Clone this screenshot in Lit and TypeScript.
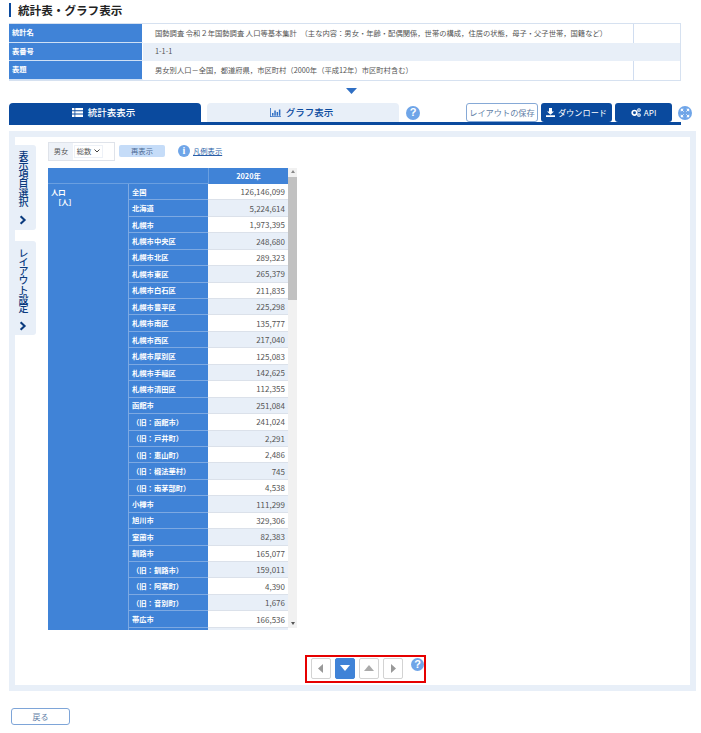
import { LitElement, html, css, svg } from "lit";
import { customElement } from "lit/decorators.js";

const ROWS: [string, string, boolean?][] = [
  ["全国", "126,146,099"], ["北海道", "5,224,614"], ["札幌市", "1,973,395"], ["札幌市中央区", "248,680"],
  ["札幌市北区", "289,323"], ["札幌市東区", "265,379"], ["札幌市白石区", "211,835"], ["札幌市豊平区", "225,298"],
  ["札幌市南区", "135,777"], ["札幌市西区", "217,040"], ["札幌市厚別区", "125,083"], ["札幌市手稲区", "142,625"],
  ["札幌市清田区", "112,355"], ["函館市", "251,084"], ["（旧：函館市）", "241,024", true], ["（旧：戸井町）", "2,291", true],
  ["（旧：恵山町）", "2,486", true], ["（旧：椴法華村）", "745", true], ["（旧：南茅部町）", "4,538", true], ["小樽市", "111,299"],
  ["旭川市", "329,306"], ["室蘭市", "82,383"], ["釧路市", "165,077"], ["（旧：釧路市）", "159,011", true],
  ["（旧：阿寒町）", "4,390", true], ["（旧：音別町）", "1,676", true], ["帯広市", "166,536"], ["", ""],
];

const help = (cls: string) => html`<span class="help ${cls}">?</span>`;
const chevron = html`<svg class="chev" viewBox="0 0 10 12" width="8" height="10"><path d="M2 1.2 7 6l-5 4.8" fill="none" stroke="#0a3a7e" stroke-width="2.6"/></svg>`;

@customElement("app-root")
export class AppRoot extends LitElement {
  static styles = css`
    :host { display: block; width: 701px; height: 733px; overflow: hidden; background: #fff; box-sizing: border-box; padding-top: 3px;
      font-family: "Noto Sans CJK JP", "Noto Sans", sans-serif; font-size: 7.3px; color: #555; }
    * { box-sizing: border-box; }
    .title { margin: 0 0 0 9px; height: 14px; border-left: 2px solid #0a4a9e; padding-left: 7px; font-size: 11.6px; line-height: 14px; font-weight: 700; color: #222; }
    .info { margin: 6px 0 0 9px; width: 672px; display: grid; grid-template-columns: 134px 491px 1fr; grid-auto-rows: 18.67px; border: solid #d6e1f0; border-width: 1px 1px 1px 0; }
    .info > div { display: flex; align-items: center; line-height: 1; }
    .info .k { background: #4083d7; color: #fff; font-weight: 700; padding-left: 3px; border-right: 1px solid #fff; border-bottom: 1px solid #cfe0f5; }
    .info .k:last-of-type { border-bottom: 0; }
    .info .v { padding-left: 12px; border-right: 1px solid #d0ddf0; white-space: nowrap; }
    .info .alt { background: #e8eff8; border-right-color: #e8eff8; }
    .info .alt2 { background: #e8eff8; }
    .more { display: block; margin: 7px 0 0 346px; }
    .tabs { margin: 9px 0 0 9px; width: 672px; height: 22px; border-bottom: 3px solid #0a4a9e; display: flex; }
    .tabs > * { flex: none; }
    .tab { width: 192px; height: 19px; border-radius: 4px 4px 0 0; display: flex; align-items: center; justify-content: center; gap: 5px; padding-right: 3px; font-size: 9.5px; font-weight: 500; }
    .tab.on { background: #0a4a9e; color: #fff; }
    .tab.off { background: #e8eff8; color: #0a4a9e; margin-left: 6px; }
    .help { display: inline-flex; align-items: center; justify-content: center; width: 14px; height: 14px; border-radius: 50%; background: #6fa5e8; color: #fff; font: 700 11px/1 "Liberation Sans", sans-serif; flex: none; }
    .tabs .help { margin: 3px 0 0 7px; }
    .btn { height: 19px; border-radius: 3px; display: flex; align-items: center; justify-content: center; gap: 3px; font-size: 8.2px; white-space: nowrap; }
    .b1 { width: 72px; margin-left: 46px; border: 1px solid #86a9d6; color: #5f7ea6; background: #fff; }
    .b2 { width: 71px; margin-left: 3px; background: #0a4a9e; color: #fff; }
    .b3 { width: 57px; margin-left: 3px; background: #0a4a9e; color: #fff; }
    .full { margin: 3px 0 0 6px; }
    .panel { margin: 6px 0 0 9px; width: 687px; height: 560px; background: #e8eff8; padding: 6px; }
    .inner { background: #fff; height: 548px; display: flex; }
    .side { width: 21px; flex: none; padding-top: 8px; display: flex; flex-direction: column; }
    .stab { background: #e8eff8; border-radius: 0 3px 3px 0; display: flex; flex-direction: column; align-items: flex-start; padding-left: 3px; color: #0a3a7e; font-weight: 500; }
    .stab.a { height: 85px; padding-top: 6px; }
    .stab.b { height: 94px; margin-top: 11px; padding-top: 7px; }
    .vt { writing-mode: vertical-rl; font-size: 10px; line-height: 1; letter-spacing: -0.8px; }
    .chev { margin: 9px 0 0 1px; }
    .main { margin-left: 12px; padding-top: 5px; }
    .ctl { display: flex; align-items: center; height: 19px; }
    .box { display: flex; width: 67px; height: 19px; border: 1px solid #dfe3ea; }
    .box .lb { width: 24px; background: #eef2f8; display: flex; align-items: center; justify-content: center; }
    .box .sel { margin: 2px 0 0 1px; width: 29px; height: 13px; border: 1px solid #edf1f7; display: flex; align-items: center; justify-content: center; gap: 3px; }
    .re { width: 46px; height: 12px; margin-left: 4px; border-radius: 2px; background: #c5dcf8; color: #4b6a94; display: flex; align-items: center; justify-content: center; }
    .i { margin-left: 13px; width: 12px; height: 12px; border-radius: 50%; background: #6fa5e8; color: #fff; font: 700 10px/12px "Liberation Serif", serif; text-align: center; flex: none; }
    .lnk { margin-left: 3px; color: #2a5fa8; text-decoration: underline; }
    .tbl { margin-top: 7px; width: 249px; height: 462px; overflow: hidden; display: grid; grid-template-columns: 240px 9px; }
    .grid { display: grid; grid-template-columns: 80px 80px 80px; grid-template-rows: 16px 1fr; height: 462px; }
    .h0 { grid-column: 1 / 3; background: #4083d7; border-bottom: 1px solid #6a9fe0; }
    .h1 { background: #4083d7; color: #fff; font-weight: 700; display: flex; align-items: center; justify-content: center; border-left: 1px solid #6a9fe0; }
    .stub { background: #4083d7; color: #fff; font-weight: 700; padding: 3px 0 0 3px; line-height: 10px; }
    .stub span { display: block; padding-left: 3px; }
    .rows { grid-column: 2 / 4; overflow: hidden; }
    .r { display: grid; grid-template-columns: 80px 80px; height: 16.44px; }
    .r .n { background: #4083d7; color: #fff; font-weight: 700; border-left: 1px solid #7da9e2; border-bottom: 1px solid #7da9e2; padding-left: 3px; display: flex; align-items: center; white-space: nowrap; }
    .r .d { border-bottom: 1px solid #dbe1ea; display: flex; align-items: center; justify-content: flex-end; padding-right: 3px; font-size: 8px; background: #fff; }
    .r:nth-child(even) .d { background: #e8eff8; }
    .bar { background: #f1f1f1; height: 460px; position: relative; }
    .thumb { margin-top: 9px; height: 123px; background: #c1c1c1; }
    .ua, .da { position: absolute; left: 2.5px; width: 0; height: 0; border: 2px solid transparent; }
    .ua { top: 2px; border-bottom: 3px solid #888; border-top: 0; }
    .da { bottom: 3px; border-top: 3px solid #555; border-bottom: 0; }
    .pager { margin: 25px 0 0 257px; width: 121px; height: 28px; border: 2px solid #e60000; display: flex; padding: 1px 0 0 4px; }
    .pb { width: 20px; height: 21px; margin-right: 4px; border: 1px solid #d3d3d3; border-radius: 2px; background: #fff; display: flex; align-items: center; justify-content: center; }
    .pb.on { background: #4083d7; border-color: #4083d7; }
    .pager .help { margin: 0 0 0 4px; width: 13px; height: 13px; }
    .back { margin: 17px 0 0 11px; width: 59px; height: 17px; border: 1px solid #7ea5d8; border-radius: 3px; display: flex; align-items: center; justify-content: center; color: #5f7ea6; font-size: 8px; }
  `;

  render() {
    return html`
      <h1 class="title">統計表・グラフ表示</h1>
      <div class="info">
        <div class="k">統計名</div><div class="v">国勢調査 令和２年国勢調査 人口等基本集計　（主な内容：男女・年齢・配偶関係，世帯の構成，住居の状態，母子・父子世帯，国籍など）</div><div></div>
        <div class="k">表番号</div><div class="v alt">1-1-1</div><div class="alt2"></div>
        <div class="k">表題</div><div class="v">男女別人口－全国，都道府県，市区町村（2000年（平成12年）市区町村含む）</div><div></div>
      </div>
      <svg class="more" width="11" height="6" viewBox="0 0 11 6"><path d="M0 0h11L5.500 6z" fill="#2f6fc4"/></svg>
      <div class="tabs">
        <div class="tab on">
          <svg width="11" height="9" viewBox="0 0 11 9" fill="#fff"><path d="M0 0h2.500v2.300H0zM3.300 0H11v2.300H3.300zM0 3.300h2.500v2.300H0zM3.300 3.300H11v2.300H3.300zM0 6.600h2.500V9H0zM3.300 6.600H11V9H3.300z"/></svg>
          <span>統計表表示</span>
        </div>
        <div class="tab off">
          <svg width="11" height="9" viewBox="0 0 11 9" fill="#2f6fc4"><path d="M0 0h.8v8.200H11V9H0zM2 5h1.500v2.700H2zM4.300 2.500h1.500v5.200H4.300zM6.600 4h1.500v3.700H6.600zM8.900 1.500h1.500v6.200H8.900z"/></svg>
          <span>グラフ表示</span>
        </div>
        ${help("")}
        <div class="btn b1">レイアウトの保存</div>
        <div class="btn b2">
          <svg width="9" height="9" viewBox="0 0 9 9" fill="#fff"><path d="M3 0h3v3.500h2L4.500 6.800 1 3.500h2zM0 7.200h9V9H0z"/></svg>
          <span>ダウンロード</span>
        </div>
        <div class="btn b3">
          <svg width="10" height="9" viewBox="0 0 10 9"><circle cx="3.500" cy="4.800" r="2.300" fill="none" stroke="#fff" stroke-width="1.700"/><circle cx="8" cy="2" r="1.300" fill="none" stroke="#fff" stroke-width="1.100"/><circle cx="8" cy="7" r="1.300" fill="none" stroke="#fff" stroke-width="1.100"/></svg>
          <span>API</span>
        </div>
        <svg class="full" width="14" height="14" viewBox="0 0 15 15">
          <circle cx="7.500" cy="7.500" r="7.500" fill="#6fa5e8"/>
          ${svg`<path d="M3 3h3.200L3 6.200zM12 3v3.200L8.800 3zM3 12V8.800L6.200 12zM12 12H8.800L12 8.800z" fill="#fff"/><path d="M4.300 4.300l1.700 1.700M10.700 4.300 9 6M4.300 10.700 6 9M10.700 10.700 9 9" stroke="#fff" stroke-width="1"/>`}
        </svg>
      </div>
      <div class="panel">
        <div class="inner">
          <div class="side">
            <div class="stab a"><span class="vt">表示項目選択</span>${chevron}</div>
            <div class="stab b"><span class="vt">レイアウト設定</span>${chevron}</div>
          </div>
          <div class="main">
            <div class="ctl">
              <div class="box">
                <div class="lb">男女</div>
                <div class="sel">総数
                  <svg width="6" height="4" viewBox="0 0 6 4"><path d="M.5.500 3 3 5.500.5" fill="none" stroke="#444" stroke-width="1"/></svg>
                </div>
              </div>
              <div class="re">再表示</div>
              <div class="i">i</div>
              <span class="lnk">凡例表示</span>
            </div>
            <div class="tbl">
              <div class="grid">
                <div class="h0"></div>
                <div class="h1">2020年</div>
                <div class="stub">人口<span>［人］</span></div>
                <div class="rows">
                  ${ROWS.map(([n, d]) => html`<div class="r"><div class="n">${n}</div><div class="d">${d}</div></div>`)}
                </div>
              </div>
              <div class="bar"><i class="ua"></i><div class="thumb"></div><i class="da"></i></div>
            </div>
            <div class="pager">
              <div class="pb"><svg width="6" height="9" viewBox="0 0 6 9"><path d="M5 0v9L0 4.500z" fill="#999"/></svg></div>
              <div class="pb on"><svg width="10" height="6" viewBox="0 0 10 6"><path d="M0 0h10L5 6z" fill="#fff"/></svg></div>
              <div class="pb"><svg width="10" height="6" viewBox="0 0 10 6"><path d="M0 6h10L5 0z" fill="#aaa"/></svg></div>
              <div class="pb"><svg width="6" height="9" viewBox="0 0 6 9"><path d="M1 0v9l5-4.500z" fill="#999"/></svg></div>
              ${help("")}
            </div>
          </div>
        </div>
      </div>
      <div class="back">戻る</div>
    `;
  }
}
